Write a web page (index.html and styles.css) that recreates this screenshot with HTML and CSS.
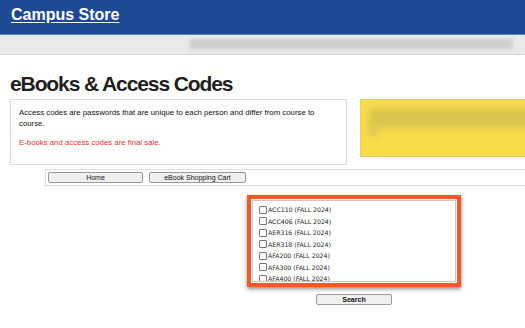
FILE: index.html
```html
<!DOCTYPE html>
<html>
<head>
<meta charset="utf-8">
<link rel="stylesheet" href="styles.css">
</head>
<body>
<header class="topbar">
  <a class="brand" href="#">Campus Store</a>
</header>
<div class="subbar">
  <div class="subbar-pill"></div>
</div>
<main class="page">
  <h1 class="title">eBooks &amp; Access Codes</h1>
  <div class="intro-row">
    <div class="info">
      <p class="info-text">Access codes are passwords that are unique to each person and differ from course to course.</p>
      <p class="info-warn">E-books and access codes are final sale.</p>
    </div>
    <div class="promo">
      <div class="promo-blur"></div>
      <div class="promo-blur short"></div>
    </div>
  </div>
  <div class="navbar">
    <button class="btn nav-btn">Home</button>
    <button class="btn nav-btn">eBook Shopping Cart</button>
  </div>
  <div class="course-area">
    <div class="highlight">
      <div class="listbox">
        <label class="opt"><span class="cb"></span>ACC110 (FALL 2024)</label>
        <label class="opt"><span class="cb"></span>ACC406 (FALL 2024)</label>
        <label class="opt"><span class="cb"></span>AER316 (FALL 2024)</label>
        <label class="opt"><span class="cb"></span>AER318 (FALL 2024)</label>
        <label class="opt"><span class="cb"></span>AFA200 (FALL 2024)</label>
        <label class="opt"><span class="cb"></span>AFA300 (FALL 2024)</label>
        <label class="opt"><span class="cb"></span>AFA400 (FALL 2024)</label>
      </div>
    </div>
    <button class="btn search-btn">Search</button>
  </div>
</main>
</body>
</html>
```
FILE: styles.css
```css
html, body {
  margin: 0;
  padding: 0;
  background: #ffffff;
  overflow: hidden;
  font-family: "Liberation Sans", Arial, sans-serif;
  color: #222;
}
.topbar {
  height: 35px;
  background: #1d4a93;
  border-bottom: 1px solid #5d7fb8;
  box-sizing: border-box;
  padding: 5px 0 0 11px;
}
.brand {
  color: #fff;
  font-weight: bold;
  font-size: 16px;
  line-height: 20px;
  text-decoration: underline;
  text-underline-offset: 2px;
}
.subbar {
  background: #e9e9e9;
  border-bottom: 1px solid #d6d6d6;
  padding-top: 4px;
  box-sizing: border-box;
  height: 20px;
}
.subbar-pill {
  margin-left: 190px;
  width: 323px;
  height: 10px;
  background: #cfcfcf;
  filter: blur(1.5px);
  border-radius: 2px;
}
.page {
  padding-left: 10px;
}
.title {
  margin: 14px 0 0 0;
  font-size: 21px;
  line-height: 30px;
  font-weight: bold;
  letter-spacing: -1.1px;
  color: #1e1e1e;
  height: 30px;
}
.intro-row {
  display: flex;
  align-items: flex-start;
  width: 600px;
}
.info {
  width: 337px;
  height: 66px;
  box-sizing: border-box;
  border: 1px solid #dcdcdc;
  padding: 7px 0 0 8px;
}
.info-text {
  margin: 0;
  max-width: 305px;
  font-size: 7.8px;
  line-height: 11px;
  color: #111;
}
.info-warn {
  margin: 8px 0 0 0;
  font-size: 7.8px;
  line-height: 11px;
  color: #e8322d;
}
.promo {
  margin-left: 13px;
  flex: 1;
  height: 58px;
  background: #f8dd4b;
  border: 1px solid #e6d070;
  box-sizing: border-box;
  padding: 8px 0 0 8px;
  overflow: hidden;
}
.promo-blur {
  height: 20px;
  background: #dcc54e;
  filter: blur(3px);
  margin-right: -10px;
}
.promo-blur.short {
  width: 10px;
  height: 10px;
  margin-top: -2px;
}
.navbar {
  margin: 4px 0 0 35px;
  height: 17px;
  width: 600px;
  border: 1px solid #dedede;
  box-sizing: border-box;
  display: flex;
  align-items: center;
  gap: 6px;
  padding-left: 2px;
}
.btn {
  font-family: "Liberation Sans", Arial, sans-serif;
  font-size: 7px;
  background: #efefef;
  border: 1px solid #9a9a9a;
  border-radius: 2px;
  color: #111;
  padding: 0;
  height: 11px;
  line-height: 9px;
}
.nav-btn {
  width: 95px;
}
.nav-btn + .nav-btn {
  width: 97px;
}
.course-area {
  margin-left: 237px;
  margin-top: 9px;
  width: 214px;
  display: flex;
  flex-direction: column;
  align-items: center;
}
.highlight {
  width: 214px;
  height: 92px;
  box-sizing: border-box;
  border: 4px solid #f05a26;
  box-shadow: 0 2px 4px rgba(0,0,0,0.45);
  background: #f4f4f4;
  padding: 1px;
}
.listbox {
  height: 100%;
  box-sizing: border-box;
  background: #fff;
  border: 1px solid #c8c8c8;
  overflow: hidden;
  padding: 3px 0 0 6px;
}
.opt {
  display: flex;
  align-items: center;
  height: 11.5px;
  font-family: "DejaVu Sans", Verdana, sans-serif;
  font-size: 6.2px;
  color: #222;
}
.cb {
  width: 6px;
  height: 6px;
  border: 1px solid #777;
  border-radius: 1px;
  background: #fff;
  margin-right: 1px;
  flex: none;
}
.search-btn {
  margin-top: 7px;
  width: 76px;
  font-weight: bold;
}
```
